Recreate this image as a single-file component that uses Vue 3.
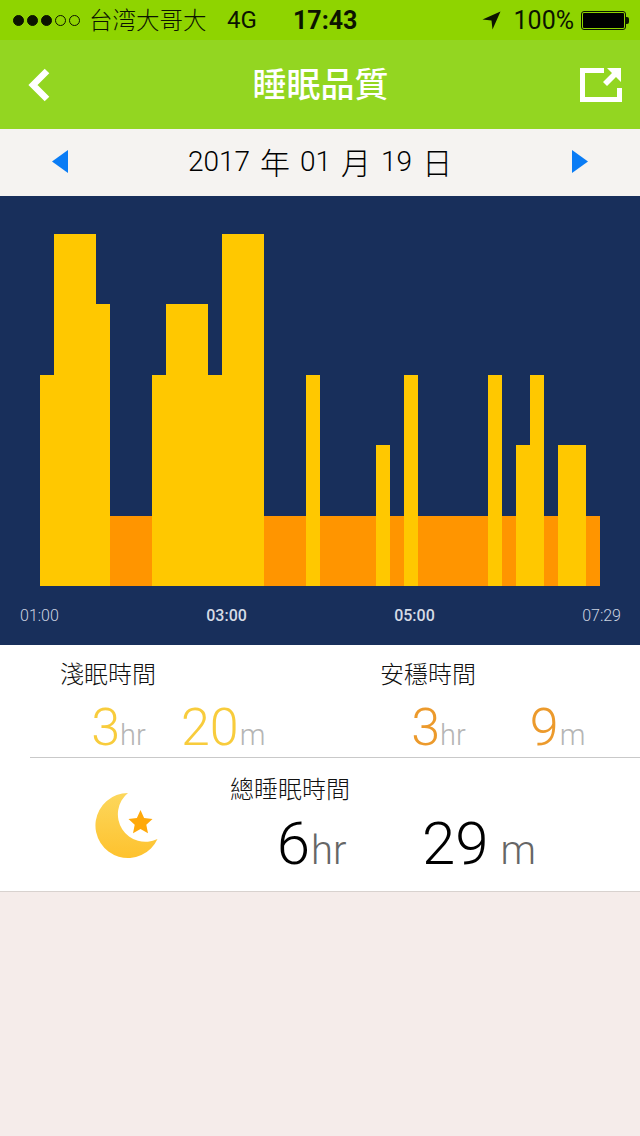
<template>
<div class="page">
  <div class="status">
    <div class="signal">
      <i v-for="n in 5" :key="n" :class="{on: n <= 3}"></i>
    </div>
    <span class="carrier">台湾大哥大</span>
    <span class="net">4G</span>
    <span class="clock">17:43</span>
    <div class="status-right">
      <svg class="arrow" width="19" height="19" viewBox="0 0 19 19">
        <path d="M18.5 0.5 L0.5 8.5 L9.5 9.5 L10.5 18.5 Z" fill="#0c1400"/>
      </svg>
      <span class="percent">100%</span>
      <div class="battery"><b></b></div>
      <em class="nub"></em>
    </div>
  </div>

  <div class="nav">
    <svg class="back" width="24" height="34" viewBox="0 0 24 34">
      <path d="M20 3 L6 17 L20 31" fill="none" stroke="#fff" stroke-width="6.5"/>
    </svg>
    <h1>睡眠品質</h1>
    <svg class="share" width="42" height="34" viewBox="0 0 42 34">
      <path d="M24 2.5 H2.5 V31.5 H39.5 V20" fill="none" stroke="#fff" stroke-width="5"/>
      <path d="M41 0 V14 L36 9 L27 18 L23 14 L32 5 L27 0 Z" fill="#fff"/>
    </svg>
  </div>

  <div class="date">
    <svg width="16" height="23" viewBox="0 0 16 23"><path d="M16 0 V23 L0 11.5 Z" fill="#0a7cf5"/></svg>
    <div class="date-text">2017<em>年</em>01<em>月</em>19<em>日</em></div>
    <svg width="16" height="23" viewBox="0 0 16 23"><path d="M0 0 V23 L16 11.5 Z" fill="#0a7cf5"/></svg>
  </div>

  <div class="chart">
    <div class="bars">
      <div
        v-for="(bar, index) in bars"
        :key="index"
        class="bar"
        :class="bar[1] === 1 ? 'deep' : 'light'"
        :style="{width: bar[0] * 14 + 'px', height: heights[bar[1]] + 'px'}"
      ></div>
    </div>
    <div class="axis">
      <span>01:00</span>
      <span class="mid">03:00</span>
      <span class="mid">05:00</span>
      <span>07:29</span>
    </div>
  </div>

  <div class="card">
    <div class="stats">
      <div v-for="stat in stats" :key="stat.label" class="stat">
        <h3>{{ stat.label }}</h3>
        <div class="value" :class="stat.cls">
          <b class="num-h">{{ stat.h }}</b><small>hr</small>
          <b class="num-m">{{ stat.m }}</b><small>m</small>
        </div>
      </div>
    </div>
    <div class="total">
      <svg class="moon" width="64" height="68" viewBox="0 0 64 68">
        <defs>
          <linearGradient id="moonfill" x1="0" y1="0" x2="0" y2="1">
            <stop offset="0" stop-color="#fcd75c"/>
            <stop offset="1" stop-color="#fec22e"/>
          </linearGradient>
        </defs>
        <path d="M33 1 A32.5 32.5 0 1 0 62.5 47 A27.5 27.5 0 0 1 33 1 Z" fill="url(#moonfill)"/>
        <path d="M45.5 18 L49.1 26 L57.5 27 L51.3 32.8 L53 41.3 L45.5 37 L38 41.3 L39.7 32.8 L33.5 27 L41.9 26 Z" fill="#ffa90a"/>
      </svg>
      <div class="total-text">
        <h3>總睡眠時間</h3>
        <div class="value big">
          <b class="num-h">6</b><small>hr</small>
          <b class="num-m">29</b><small class="gap">m</small>
        </div>
      </div>
    </div>
  </div>
  <div class="rest"></div>
</div>
</template>

<script setup>
// [width in 14px units, level]
const bars = [
  [1, 3], [3, 5], [1, 4], [3, 1], [1, 3], [3, 4], [1, 3], [3, 5], [3, 1],
  [1, 3], [4, 1], [1, 2], [1, 1], [1, 3], [5, 1], [1, 3], [1, 1], [1, 2],
  [1, 3], [1, 1], [2, 2], [1, 1]
]
const heights = {1: 70, 2: 141, 3: 211, 4: 282, 5: 352}

const stats = [
  {label: '淺眠時間', h: '3', m: '20', cls: 'yellow'},
  {label: '安穩時間', h: '3', m: '9', cls: 'orange'}
]
</script>

<style>
html, body {
  margin: 0;
  background: #f5ecea;
}
</style>

<style scoped>
.page {
  width: 640px;
  height: 1136px;
  overflow: hidden;
  display: flex;
  flex-direction: column;
  font-family: Roboto, "Noto Sans CJK TC", sans-serif;
  background: #f5ecea;
}

.status {
  height: 40px;
  background: #8fd400;
  color: #0c1400;
  display: flex;
  align-items: center;
  padding-left: 13px;
  font-size: 23px;
  font-family: "Noto Sans CJK TC", sans-serif;
}

.signal {
  display: flex;
  gap: 3px;
  width: 76px;
}

.signal i {
  width: 11px;
  height: 11px;
  box-sizing: border-box;
  border: 1px solid #0c1400;
  border-radius: 50%;
}

.signal i.on {
  background: #0c1400;
}

.carrier {
  width: 138px;
  font-size: 23.5px;
  margin-top: -3px;
  font-weight: 300;
}

.net {
  width: 66px;
  font-family: Roboto, sans-serif;
  font-size: 24px;
}

.clock {
  font-family: Roboto, sans-serif;
  font-weight: 700;
  font-size: 25px;
}

.status-right {
  margin-left: auto;
  display: flex;
  align-items: center;
  padding-right: 11px;
}

.arrow {
  margin-right: 13px;
}

.percent {
  font-family: Roboto, sans-serif;
  font-size: 25px;
  margin-right: 7px;
}

.battery {
  width: 45px;
  height: 19px;
  box-sizing: border-box;
  border: 1px solid #0c1400;
  border-radius: 3px;
  padding: 1px;
}

.battery b {
  display: block;
  height: 100%;
  background: #000;
  border-radius: 1px;
}

.nub {
  width: 3px;
  height: 7px;
  background: #0c1400;
  border-radius: 0 2px 2px 0;
}

.nav {
  height: 89px;
  background: #93d621;
  display: flex;
  align-items: center;
  justify-content: space-between;
  padding: 0 18px 0 27px;
}

.nav h1 {
  margin: -4px 0 0 10px;
  font-size: 34px;
  font-weight: 500;
  color: #fff;
  font-family: "Noto Sans CJK TC", sans-serif;
}

.date {
  height: 67px;
  box-sizing: border-box;
  padding: 0 52px 3px;
  background: #f5f3f1;
  display: flex;
  align-items: center;
  justify-content: space-between;
}

.date-text {
  font-size: 28px;
  font-weight: 300;
  color: #000;
  display: flex;
  align-items: center;
}

.date-text em {
  font-style: normal;
  font-size: 30px;
  font-family: "Noto Sans CJK TC", sans-serif;
  font-weight: 300;
  margin: 0 10px;
}

.date-text em:last-child {
  margin-right: 0;
}

.chart {
  height: 449px;
  background: #182f5b;
  box-sizing: border-box;
  padding-top: 38px;
}

.bars {
  height: 352px;
  margin-left: 40px;
  display: flex;
  align-items: flex-end;
}

.bar.light {
  background: #ffc800;
}

.bar.deep {
  background: #ff9500;
}

.axis {
  display: flex;
  justify-content: space-between;
  padding: 20px 19px 0 20px;
  font-size: 16px;
  line-height: 20px;
  color: #ccd3e0;
  font-weight: 300;
}

.axis .mid {
  font-weight: 500;
  color: #d5dbe5;
}

.card {
  background: #fff;
  height: 247px;
  box-sizing: border-box;
  border-bottom: 1px solid #d8d2cf;
}

.stats {
  margin-left: 30px;
  height: 113px;
  box-sizing: border-box;
  border-bottom: 1px solid #c9c9c9;
  display: grid;
  grid-template-columns: 320px 290px;
}

h3 {
  margin: 0;
  font-size: 24px;
  color: #111;
  line-height: 32px;
  font-family: "Noto Sans CJK TC", sans-serif;
  font-weight: 300;
}

.stat h3 {
  padding: 12px 0 0 30px;
}

.value {
  display: flex;
  align-items: baseline;
  font-weight: 300;
}

.value b {
  font-weight: 300;
}

.stat .value {
  margin-top: 13px;
  font-size: 52px;
  line-height: 52px;
}

.stat .num-h {
  width: 90px;
  text-align: right;
}

.stat .num-m {
  width: 93px;
  text-align: right;
}

.stat small {
  font-size: 29px;
  color: #b5b5b5;
}

.stat .num-m + small {
  margin-left: 1px;
}

.yellow b {
  color: #f8cc3c;
}

.orange b {
  color: #ec9a2c;
}

.total {
  display: flex;
  padding: 34px 0 0 95px;
}

.moon {
  flex-shrink: 0;
}

.total-text {
  margin: -20px 0 0 71px;
}

.big {
  font-size: 60px;
  line-height: 62px;
  margin-top: 9px;
  color: #000;
}

.big .num-h {
  width: 80px;
  text-align: right;
}

.big .num-m {
  width: 142px;
  text-align: right;
}

.big small {
  font-size: 40px;
  color: #666;
  margin-left: 1px;
}

.big small.gap {
  margin-left: 12px;
}

.rest {
  flex: 1;
}
</style>
